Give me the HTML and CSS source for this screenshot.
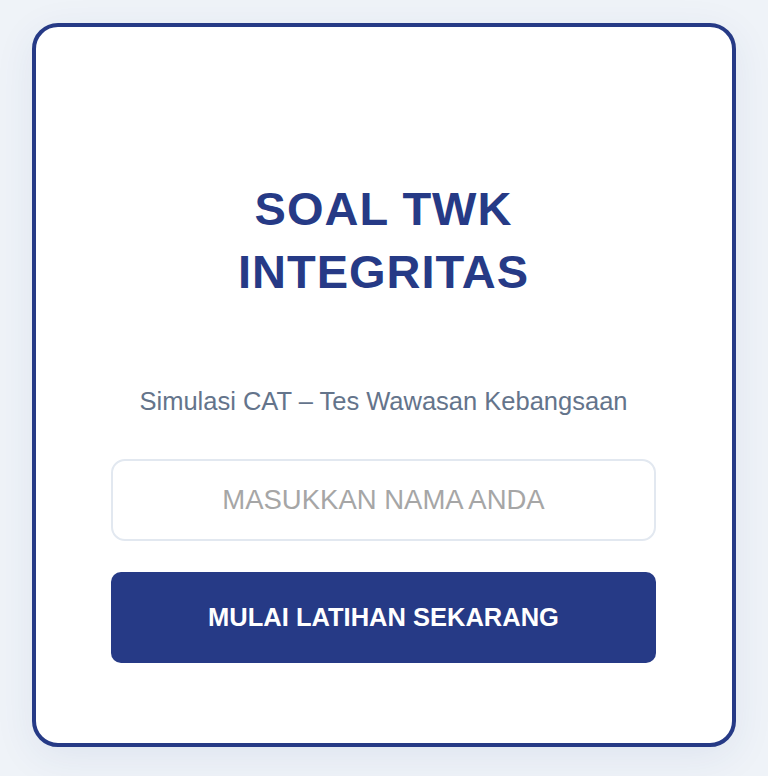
FILE: index.html
```html
<!DOCTYPE html>
<html lang="id">
<head>
<meta charset="utf-8">
<title>Soal TWK Integritas</title>
<link rel="stylesheet" href="styles.css">
</head>
<body>
<main class="card">
  <h1 class="title">SOAL TWK INTEGRITAS</h1>
  <p class="subtitle">Simulasi CAT – Tes Wawasan Kebangsaan</p>
  <input class="name-input" type="text" placeholder="MASUKKAN NAMA ANDA">
  <button class="start-btn" type="button">MULAI LATIHAN SEKARANG</button>
</main>
</body>
</html>
```

FILE: styles.css
```css
* { box-sizing: border-box; }

html, body {
  margin: 0;
  height: 100%;
}

body {
  background: #eff3f8;
  font-family: "Liberation Sans", Arial, sans-serif;
  display: flex;
  justify-content: center;
  align-items: flex-start;
  padding: 23px 0 0 0;
}

.card {
  width: 704px;
  height: 724px;
  background: #ffffff;
  border: 4px solid #263a86;
  border-radius: 26px;
  box-shadow: 0 10px 40px rgba(38, 58, 134, 0.08);
  padding: 150px 76px 0 75px;
  display: flex;
  flex-direction: column;
  align-items: stretch;
}

.title {
  margin: 0;
  text-align: center;
  color: #263a86;
  font-size: 47px;
  font-weight: 700;
  line-height: 63px;
  letter-spacing: 1px;
  padding: 0 40px;
}

.subtitle {
  margin: 84px 0 0 0;
  text-align: center;
  color: #64748b;
  font-size: 25.5px;
  line-height: 29px;
}

.name-input {
  margin-top: 43px;
  height: 82px;
  width: 100%;
  border: 2px solid #e2e8f0;
  border-radius: 14px;
  background: #ffffff;
  text-align: center;
  font-family: "Liberation Sans", Arial, sans-serif;
  font-size: 27.5px;
  color: #333333;
  outline: none;
}

.name-input::placeholder {
  color: #a6a6a6;
}

.start-btn {
  margin-top: 31px;
  height: 91px;
  width: 100%;
  border: none;
  border-radius: 10px;
  background: #263a86;
  color: #ffffff;
  font-family: "Liberation Sans", Arial, sans-serif;
  font-size: 25.5px;
  font-weight: 700;
  cursor: pointer;
}
```
